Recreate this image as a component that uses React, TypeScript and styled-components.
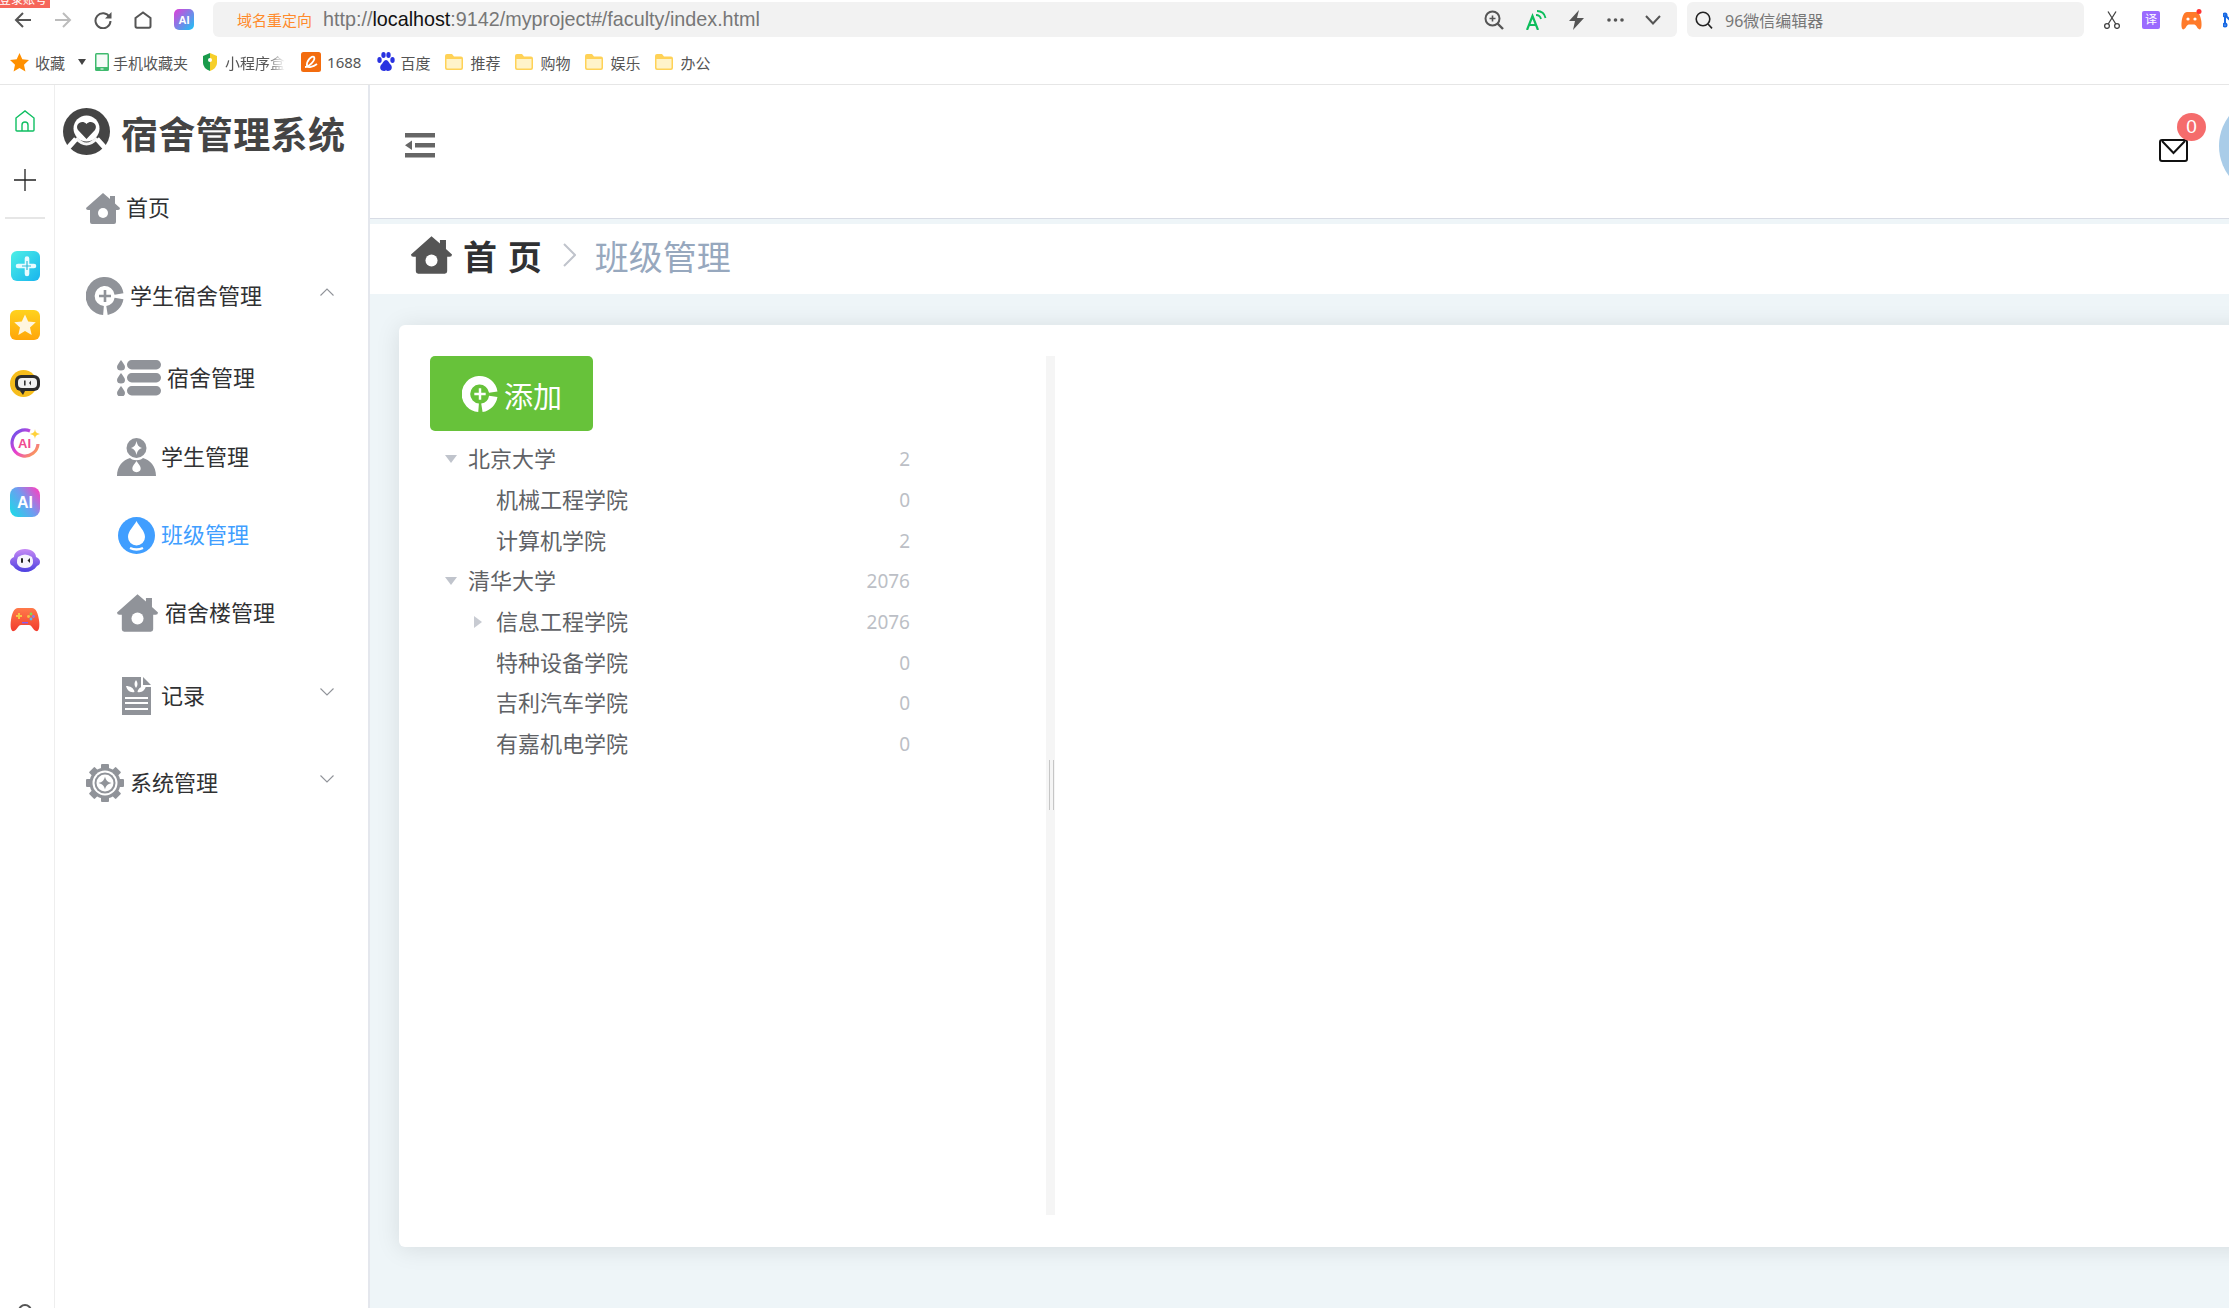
import React from "react";
import styled, { createGlobalStyle } from "styled-components";

const GlobalStyle = createGlobalStyle`
  html, body {
    margin: 0;
    padding: 0;
    background: #fff;
  }
  body {
    font-family: "Noto Sans", "Noto Sans CJK SC", sans-serif;
  }
  * {
    box-sizing: border-box;
  }
`;

type TreeNode = {
  label: string;
  count: number;
  depth: number;
  toggle?: "open" | "closed";
};

const treeData: TreeNode[] = [
  { label: "北京大学", count: 2, depth: 0, toggle: "open" },
  { label: "机械工程学院", count: 0, depth: 1 },
  { label: "计算机学院", count: 2, depth: 1 },
  { label: "清华大学", count: 2076, depth: 0, toggle: "open" },
  { label: "信息工程学院", count: 2076, depth: 1, toggle: "closed" },
  { label: "特种设备学院", count: 0, depth: 1 },
  { label: "吉利汽车学院", count: 0, depth: 1 },
  { label: "有嘉机电学院", count: 0, depth: 1 },
];

// ---- icons ----
const HomeIcon = ({ w, h }: { w: number; h: number }) => (
  <svg width={w} height={h} viewBox="0 0 34 31">
    <path
      fill="currentColor"
      d="M17 0 L24 6 V3 H29 V10.5 L34 15 Q34 17 32 17 H30 V29 Q30 31 28 31 H6 Q4 31 4 29 V17 H2 Q0 17 0 15 Z"
    />
    <circle cx="17" cy="20" r="5" fill="#fff" />
  </svg>
);

const RingPlusIcon = ({ size }: { size: number }) => (
  <svg width={size} height={size} viewBox="0 0 38 38" fill="none" stroke="currentColor">
    <path strokeWidth="9" d="M33 17 A14.5 14.5 0 1 0 17.5 33.5" />
    <path strokeWidth="9" d="M21 33.5 A14.5 14.5 0 0 0 33 21.5" />
    <path strokeWidth="2.6" d="M19 13 V25 M13 19 H25" />
  </svg>
);

const drop = (x: number, y: number, s: number) =>
  `M${x} ${y} C${x + 2 * s} ${y + 3 * s} ${x + 4 * s} ${y + 5 * s} ${x + 4 * s} ${y + 7 * s} A${4 * s} ${3.6 * s} 0 0 1 ${x - 4 * s} ${y + 7 * s} C${x - 4 * s} ${y + 5 * s} ${x - 2 * s} ${y + 3 * s} ${x} ${y} Z`;

const ListIcon = () => (
  <svg width="44" height="36" viewBox="0 0 44 36" fill="#909399">
    <path d={drop(4, 0, 1)} />
    <path d={drop(4, 13, 1)} />
    <path d={drop(4, 26, 1)} />
    <rect x="10" y="0" width="34" height="9.5" rx="4.7" />
    <rect x="10" y="13" width="34" height="9.5" rx="4.7" />
    <rect x="10" y="26" width="34" height="9.5" rx="4.7" />
  </svg>
);

const PersonIcon = () => (
  <svg width="39" height="38" viewBox="0 0 39 38" fill="#909399">
    <circle cx="19.5" cy="10" r="10" />
    <path fill="#fff" d="M19.5 3 C20.5 7.5 21.5 8.5 25 10 C21.5 11.5 20.5 12.5 19.5 17 C18.5 12.5 17.5 11.5 14 10 C17.5 8.5 18.5 7.5 19.5 3 Z" />
    <path d="M0 38 C0 28 6 22 13 20 C16 23 23 23 26 20 C33 22 39 28 39 38 Z" />
    <path fill="#fff" d={drop(19.5, 23, 1.05)} />
  </svg>
);

const DropCircleIcon = () => (
  <svg width="37" height="37" viewBox="0 0 37 37">
    <circle cx="18.5" cy="18.5" r="18.5" fill="#409eff" />
    <path fill="#fff" d="M18.5 4 C21 9 27 14 27 20 A8.5 8.5 0 0 1 10 20 C10 14 16 9 18.5 4 Z" />
    <path fill="none" stroke="#fff" strokeWidth="2.4" d="M12 31 Q18.5 34 25 31" />
  </svg>
);

const RecordIcon = () => (
  <svg width="29" height="38" viewBox="0 0 29 38" fill="#909399">
    <path d="M0 0 H19 V10 H29 V38 H0 Z" />
    <path d="M21 0 L29 8 H21 Z" />
    <path fill="#fff" d="M14 3 C16 6 16 8 14 11 C12 8 12 6 14 3 Z M4 9 C8 9 12 11 12.5 15 C8 16 5 13 4 9 Z M24 9 C20 9 16 11 15.5 15 C20 16 23 13 24 9 Z" />
    <rect x="3" y="20" width="23" height="2" fill="#fff" />
    <rect x="3" y="25" width="23" height="2" fill="#fff" />
    <rect x="3" y="31" width="23" height="2" fill="#fff" />
  </svg>
);

const GearIcon = () => (
  <svg width="38" height="38" viewBox="0 0 38 38">
    <g fill="#909399">
      {[0, 45, 90, 135, 180, 225, 270, 315].map((a) => (
        <rect key={a} x="15" y="0" width="8" height="8" rx="1" transform={`rotate(${a} 19 19)`} />
      ))}
      <circle cx="19" cy="19" r="15.5" />
    </g>
    <circle cx="19" cy="19" r="12.5" fill="#fff" />
    <circle cx="19" cy="19" r="10.5" fill="#909399" />
    <circle cx="19" cy="19" r="8.5" fill="#fff" />
    <path fill="#909399" d="M19 12.5 C20 16.5 21.5 18 25.5 19 C21.5 20 20 21.5 19 25.5 C18 21.5 16.5 20 12.5 19 C16.5 18 18 16.5 19 12.5 Z" />
  </svg>
);

const Chevron = ({ up }: { up?: boolean }) => (
  <svg width="14" height="8" viewBox="0 0 14 8" fill="none" stroke="#909399" strokeWidth="1.1">
    <path d={up ? "M0.5 7.5 L7 1 L13.5 7.5" : "M0.5 0.5 L7 7 L13.5 0.5"} />
  </svg>
);

const LogoIcon = () => (
  <svg width="47" height="47" viewBox="0 0 47 47">
    <circle cx="23.5" cy="23.5" r="23.5" fill="#444" />
    <circle cx="23.5" cy="20.5" r="13" fill="#fff" />
    <path fill="#444" d="M23.5 31 L15 22 C11.5 17 18.5 11 23.5 16 C28.5 11 35.5 17 32 22 Z" />
    <path stroke="#fff" strokeWidth="5" d="M13 31 L4 41 M34 31 L43 41" />
    <path fill="none" stroke="#fff" strokeWidth="3" d="M13 30 Q23.5 42 34 30" opacity="0.95" />
  </svg>
);

const BackIcon = ({ dim }: { dim?: boolean }) => (
  <svg width="18" height="18" viewBox="0 0 18 18" fill="none" stroke={dim ? "#bcbcbc" : "#555"} strokeWidth="2" style={dim ? { transform: "scaleX(-1)" } : undefined}>
    <path d="M17 9 H2 M9 2 L2 9 L9 16" />
  </svg>
);

const ReloadIcon = () => (
  <svg width="18" height="18" viewBox="0 0 18 18" fill="none" stroke="#555" strokeWidth="2">
    <path d="M15.5 6 A7.5 7.5 0 1 0 16.5 10" />
    <path fill="#555" stroke="none" d="M17.5 1 V7.5 H11 Z" />
  </svg>
);

const BrowserHomeIcon = () => (
  <svg width="18" height="18" viewBox="0 0 18 18" fill="none" stroke="#555" strokeWidth="2">
    <path d="M1.5 7 L9 1.5 L16.5 7 V15 Q16.5 16.8 15 16.8 H3 Q1.5 16.8 1.5 15 Z" />
  </svg>
);

const ZoomInIcon = () => (
  <svg width="20" height="20" viewBox="0 0 20 20" fill="none" stroke="#555" strokeWidth="2">
    <circle cx="8.5" cy="8.5" r="7" />
    <path strokeWidth="1.6" d="M8.5 5.5 V11.5 M5.5 8.5 H11.5" />
    <path strokeWidth="2.4" d="M13.5 13.5 L19 19" />
  </svg>
);

const ReadAloudIcon = () => (
  <svg width="21" height="20" viewBox="0 0 21 20" fill="none" stroke="#0cbd5b" strokeWidth="2.2">
    <path d="M1 20 L6.5 6 L12 20 M3 15 H10" />
    <path strokeWidth="1.8" d="M10 5 Q14 5 15 9 M11 1 Q18 1 19.5 8" />
  </svg>
);

const BoltIcon = () => (
  <svg width="17" height="20" viewBox="0 0 17 20" fill="#555">
    <path d="M11 0 L1 11 H7 L5 20 L16 8 H9 Z" />
  </svg>
);

const DotsIcon = () => (
  <svg width="17" height="4" viewBox="0 0 17 4" fill="#555">
    <circle cx="2" cy="2" r="1.8" />
    <circle cx="8.5" cy="2" r="1.8" />
    <circle cx="15" cy="2" r="1.8" />
  </svg>
);

const SearchIcon = () => (
  <svg width="18" height="18" viewBox="0 0 18 18" fill="none" stroke="#222" strokeWidth="1.6">
    <circle cx="8" cy="8" r="6.8" />
    <path d="M13 13 L17 17.4" />
  </svg>
);

const ScissorsIcon = () => (
  <svg width="18" height="18" viewBox="0 0 18 18" fill="none" stroke="#444" strokeWidth="1.3">
    <circle cx="4" cy="15" r="2.4" />
    <circle cx="14" cy="15" r="2.4" />
    <path d="M5.2 13 L13 0.5 M12.8 13 L5 0.5" />
  </svg>
);

const ExtensionGame = () => (
  <svg width="21" height="21" viewBox="0 0 21 21">
    <path fill="#ff7a2a" d="M6 3 H15 C18 3 19.5 7 20.3 12 C21 17 20.3 21 18.2 20.3 C16 19.5 15.3 15.5 13.2 15.5 H7.8 C5.7 15.5 5 19.5 2.8 20.3 C0.7 21 0 17 0.7 12 C1.5 7 3 3 6 3 Z" />
    <circle cx="7" cy="10" r="1.6" fill="#fff" />
    <circle cx="14" cy="10" r="1.6" fill="#fff" />
    <circle cx="18" cy="2.5" r="2.5" fill="#f33" />
  </svg>
);

const RailGame = () => (
  <svg width="30" height="25" viewBox="0 0 30 25">
    <defs>
      <linearGradient id="railPad" x1="0" y1="0" x2="0" y2="1">
        <stop offset="0" stopColor="#ff7a4a" />
        <stop offset="1" stopColor="#f23c2e" />
      </linearGradient>
    </defs>
    <path fill="url(#railPad)" d="M8 1 H22 C26 1 28 6 29 13 C30 20 29 25 26 24 C23 23 22 18 19 18 H11 C8 18 7 23 4 24 C1 25 0 20 1 13 C2 6 4 1 8 1 Z" />
    <path fill="#f6c544" d="M8 6 H10 V8 H12 V10 H10 V12 H8 V10 H6 V8 H8 Z" />
    <circle cx="21" cy="7" r="1.4" fill="#7ed957" />
    <circle cx="18.5" cy="9.5" r="1.4" fill="#f6c544" />
    <circle cx="23.5" cy="9.5" r="1.4" fill="#8a7cf0" />
    <circle cx="21" cy="12" r="1.4" fill="#5ab8f0" />
    <rect x="12" y="15" width="6" height="1.4" fill="#8a5cf0" />
  </svg>
);

const Folder = () => (
  <svg width="18" height="16" viewBox="0 0 18 16">
    <path fill="#ffd257" d="M0 2 Q0 0 2 0 H7 L9 2.5 H16 Q18 2.5 18 4.5 V14 Q18 16 16 16 H2 Q0 16 0 14 Z" />
    <path fill="#fff3c9" d="M1.5 5 H16.5 V13.5 Q16.5 14.5 15.5 14.5 H2.5 Q1.5 14.5 1.5 13.5 Z" />
  </svg>
);

const AiBadge = () => (
  <svg width="20" height="21" viewBox="0 0 20 21">
    <defs>
      <linearGradient id="aiTop" x1="0" y1="0" x2="1" y2="1">
        <stop offset="0" stopColor="#e13dd8" />
        <stop offset="1" stopColor="#18c5f5" />
      </linearGradient>
    </defs>
    <rect width="20" height="21" rx="5" fill="url(#aiTop)" />
    <text x="10" y="15" textAnchor="middle" fontSize="11" fontWeight="700" fill="#fff" fontFamily="Liberation Sans, sans-serif">
      AI
    </text>
  </svg>
);

// ---- browser rail icons ----
const RailHome = () => (
  <svg width="20" height="22" viewBox="0 0 20 22" fill="none" stroke="#0fbf62" strokeWidth="1.4">
    <path d="M1 8 L10 1 L19 8 V20 Q19 21 18 21 H2 Q1 21 1 20 Z" />
    <path d="M7 21 V15 A3 3 0 0 1 13 15 V21" />
  </svg>
);

const RailPlus = () => (
  <svg width="22" height="22" viewBox="0 0 22 22" fill="none" stroke="#222" strokeWidth="1.3">
    <path d="M11 0 V22 M0 11 H22" />
  </svg>
);

const RailCross = () => (
  <svg width="29" height="30" viewBox="0 0 29 30">
    <defs>
      <linearGradient id="railTeal" x1="0" y1="0" x2="1" y2="1">
        <stop offset="0" stopColor="#4ef0e6" />
        <stop offset="1" stopColor="#18b4ee" />
      </linearGradient>
    </defs>
    <rect width="29" height="30" rx="6" fill="url(#railTeal)" />
    <path fill="none" stroke="#e9fbff" strokeWidth="4.6" strokeLinecap="round" d="M16 7.5 V23 M7 15 H23" />
    <path fill="none" stroke="#35bcd9" strokeWidth="1.2" d="M16 10 V19 M11 15 H20" />
  </svg>
);

const RailStar = () => (
  <svg width="30" height="30" viewBox="0 0 30 30">
    <defs>
      <linearGradient id="railGold" x1="0" y1="0" x2="0" y2="1">
        <stop offset="0" stopColor="#ffd21e" />
        <stop offset="1" stopColor="#ffa50a" />
      </linearGradient>
    </defs>
    <rect width="30" height="30" rx="6" fill="url(#railGold)" />
    <path fill="#fff6df" d="M15 4.5 L18.2 11.5 L25.8 12.3 L20 17.4 L21.7 25 L15 21 L8.3 25 L10 17.4 L4.2 12.3 L11.8 11.5 Z" />
  </svg>
);

const RailBot = () => (
  <svg width="30" height="27" viewBox="0 0 30 27">
    <circle cx="13.5" cy="13.5" r="13.5" fill="#f6bd1c" />
    <rect x="5" y="5" width="25" height="16" rx="6" fill="#2c2c2c" />
    <path d="M10 21 L13 25 L15 21 Z" fill="#2c2c2c" />
    <rect x="8" y="8" width="19" height="10" rx="4" fill="#f2f2f2" />
    <rect x="14" y="10.5" width="1.6" height="5" fill="#333" />
    <path d="M21 10.5 L19 13 L21 15.5 Z" fill="#333" />
  </svg>
);

const RailAiRing = () => (
  <svg width="30" height="30" viewBox="0 0 30 30">
    <defs>
      <linearGradient id="railRing" x1="0" y1="0" x2="1" y2="1">
        <stop offset="0" stopColor="#5a55f0" />
        <stop offset="0.5" stopColor="#e83fd0" />
        <stop offset="1" stopColor="#ffb13c" />
      </linearGradient>
    </defs>
    <path fill="none" stroke="url(#railRing)" strokeWidth="3.2" d="M20 3 A13 13 0 1 0 28 16" />
    <text x="14.5" y="20" textAnchor="middle" fontSize="13" fontWeight="700" fill="#f0498f" fontFamily="Liberation Sans, sans-serif">
      AI
    </text>
    <path fill="#ffd23c" d="M25 1 C25.5 4 26 5 30 6 C26 7 25.5 8 25 11 C24.5 8 24 7 20 6 C24 5 24.5 4 25 1 Z" />
  </svg>
);

const RailAiSquare = () => (
  <svg width="30" height="30" viewBox="0 0 30 30">
    <defs>
      <linearGradient id="railAi" x1="0" y1="0.8" x2="1" y2="0.1">
        <stop offset="0" stopColor="#22d6e8" />
        <stop offset="0.5" stopColor="#6f9cf0" />
        <stop offset="1" stopColor="#ff3fc0" />
      </linearGradient>
    </defs>
    <rect width="30" height="30" rx="8" fill="url(#railAi)" />
    <text x="15" y="21" textAnchor="middle" fontSize="16" fontWeight="700" fill="#fff" fontFamily="Liberation Sans, sans-serif">
      AI
    </text>
  </svg>
);

const RailGhost = () => (
  <svg width="30" height="23" viewBox="0 0 30 23">
    <defs>
      <linearGradient id="railGhost" x1="0" y1="0" x2="0" y2="1">
        <stop offset="0" stopColor="#c78af5" />
        <stop offset="1" stopColor="#4b3fe0" />
      </linearGradient>
    </defs>
    <path fill="url(#railGhost)" d="M15 0 C22 0 26 4 26 8 C29 9 30 11 30 13 C30 15 29 16 27 17 C24 21 20 23 15 23 C10 23 6 21 3 17 C1 16 0 15 0 13 C0 11 1 9 4 8 C4 4 8 0 15 0 Z" />
    <path fill="#f5f2fb" d="M8 8 Q15 3 22 8 Q25 15 20 18 Q15 20 10 18 Q5 15 8 8 Z" />
    <rect x="11" y="9" width="2" height="5" rx="1" fill="#222" />
    <path d="M20 9 L17.5 11.5 L20 14 Z" fill="#222" />
  </svg>
);

const MailIcon = () => (
  <svg width="29" height="23" viewBox="0 0 29 23" fill="none" stroke="#111" strokeWidth="2">
    <rect x="1" y="1" width="27" height="21" rx="2" />
    <path d="M3 2 L14.5 14 L26 2" />
  </svg>
);

const CollapseIcon = () => (
  <svg width="30" height="25" viewBox="0 0 30 25" fill="#666" style={{ flexShrink: 0 }}>
    <rect x="0" y="0" width="30" height="4.5" />
    <rect x="10" y="10" width="20" height="4.5" />
    <rect x="0" y="20" width="30" height="4.5" />
    <path d="M0 12.3 L7 7.5 V17 Z" />
  </svg>
);

const ArrowRight = () => (
  <svg width="13" height="24" viewBox="0 0 13 24" fill="none" stroke="#c0c4cc" strokeWidth="2">
    <path d="M1 1 L12 12 L1 23" />
  </svg>
);

const Page = styled.div`
  position: relative;
  width: 2229px;
  height: 1308px;
  overflow: hidden;
  display: flex;
  flex-direction: column;
  background: #fff;
`;

// ---- browser chrome ----
const LoginTag = styled.div`
  position: absolute;
  top: 0;
  left: 0;
  width: 50px;
  height: 8px;
  overflow: hidden;
  background: #f6665a;
  color: #fff;
  font-size: 12px;
  line-height: 12px;
  white-space: nowrap;
  & > span {
    display: block;
    margin: -6px 0 0 -1px;
  }
`;

const Toolbar = styled.div`
  height: 42px;
  padding: 2px 0 5px 14px;
  display: flex;
  align-items: center;
  flex-shrink: 0;
`;

const NavButtons = styled.div`
  display: flex;
  align-items: center;
  gap: 22px;
`;

const AddressBar = styled.div`
  width: 1464px;
  height: 35px;
  margin-left: 19px;
  padding: 0 16px 0 24px;
  background: #f2f2f2;
  border-radius: 6px;
  display: flex;
  align-items: center;
  flex-shrink: 0;
`;

const RedirectTag = styled.span`
  font-size: 15px;
  color: #ff8a2b;
  width: 86px;
  flex-shrink: 0;
`;

const UrlText = styled.span`
  font-family: "Liberation Sans", sans-serif;
  font-size: 19.75px;
  color: #777;
  & > b {
    font-weight: 400;
    color: #111;
  }
`;

const AddressTools = styled.div`
  margin-left: auto;
  display: flex;
  align-items: center;
  gap: 21.5px;
`;

const SearchBox = styled.div`
  width: 397px;
  height: 35px;
  margin-left: 10px;
  padding-left: 8px;
  background: #f2f2f2;
  border-radius: 6px;
  display: flex;
  align-items: center;
  gap: 12px;
  flex-shrink: 0;
  font-size: 16px;
  color: #777;
`;

const Extensions = styled.div`
  margin-left: 19px;
  display: flex;
  align-items: center;
  gap: 21px;
  flex-shrink: 0;
`;

const TranslateBadge = styled.span`
  width: 18px;
  height: 18px;
  border-radius: 2px;
  background: #9b6bff;
  color: #fff;
  font-size: 12px;
  line-height: 18px;
  text-align: center;
`;

const BookmarkBar = styled.div`
  height: 43px;
  padding: 0 0 2px 10px;
  border-bottom: 1px solid #e6e6e6;
  display: flex;
  align-items: center;
  gap: 15px;
  font-size: 15px;
  color: #555;
  flex-shrink: 0;
`;

const Bookmark = styled.div<{ $gap?: number; $after?: number }>`
  display: flex;
  align-items: center;
  gap: ${(p) => p.$gap ?? 6}px;
  margin-right: ${(p) => p.$after ?? 0}px;
  white-space: nowrap;
`;

const FadeLabel = styled.span`
  -webkit-mask-image: linear-gradient(to right, #000 70%, transparent 100%);
  mask-image: linear-gradient(to right, #000 70%, transparent 100%);
`;

const Caret = styled.span`
  width: 0;
  height: 0;
  margin: 0 -6px 0 -2px;
  border-left: 4px solid transparent;
  border-right: 4px solid transparent;
  border-top: 6px solid #444;
`;

// ---- page body ----
const Body = styled.div`
  flex: 1;
  min-height: 0;
  display: flex;
`;

const Rail = styled.div`
  width: 55px;
  padding: 6px 4px 0 0;
  border-right: 1px solid #eeeeee;
  display: flex;
  flex-direction: column;
  align-items: center;
  overflow: hidden;
  flex-shrink: 0;
`;

const RailSlot = styled.div`
  height: 59px;
  display: flex;
  align-items: center;
  justify-content: center;
  flex-shrink: 0;
`;

const RailDivider = styled.div`
  width: 40px;
  height: 2px;
  margin: 8px 0 17px;
  background: #e6e6e6;
  flex-shrink: 0;
`;

const RailFoot = styled.div`
  margin-top: auto;
  margin-bottom: -10px;
  width: 14px;
  height: 14px;
  border: 2px solid #555;
  border-radius: 50%;
  flex-shrink: 0;
`;

const Sidebar = styled.aside`
  width: 315px;
  border-right: 2px solid #e4e7ed;
  flex-shrink: 0;
  color: #303133;
`;

const Brand = styled.div`
  height: 93px;
  padding: 23px 0 0 8px;
  display: flex;
  align-items: flex-start;
  gap: 11px;
`;

const BrandTitle = styled.h1`
  margin: 3px 0 0;
  font-size: 37px;
  line-height: 47px;
  letter-spacing: 0.4px;
  font-weight: 700;
  color: #444;
  white-space: nowrap;
`;

const MenuRow = styled.div<{ $indent: number; $top: number; $gap: number; $active?: boolean }>`
  height: 60px;
  margin-top: ${(p) => p.$top}px;
  padding: 0 34px 0 ${(p) => p.$indent}px;
  display: flex;
  align-items: center;
  gap: ${(p) => p.$gap}px;
  font-size: 22px;
  color: ${(p) => (p.$active ? "#409eff" : "#303133")};
  & > svg {
    flex-shrink: 0;
  }
`;

const MenuLabel = styled.span`
  padding-bottom: 4px;
`;

const GreyIcon = styled.span`
  display: flex;
  color: #909399;
`;

const MenuArrow = styled.span`
  margin-left: auto;
  margin-bottom: 8px;
  display: flex;
`;

const Main = styled.main`
  flex: 1;
  min-width: 0;
  overflow: hidden;
  background: #eef5f8;
`;

const Header = styled.header`
  height: 134px;
  padding-left: 35px;
  background: #fff;
  border-bottom: 1px solid #d8dce5;
  display: flex;
  align-items: center;
  & > svg {
    margin-bottom: 12px;
  }
`;

const HeaderRight = styled.div`
  margin-left: auto;
  display: flex;
  align-items: center;
  gap: 31px;
  margin-right: -90px;
`;

const MailButton = styled.div`
  position: relative;
  display: flex;
  margin-top: -2px;
`;

const Badge = styled.span`
  position: absolute;
  top: -26px;
  left: 18px;
  width: 29px;
  height: 28px;
  border-radius: 50%;
  background: #f56c6c;
  color: #fff;
  font-family: "Liberation Sans", sans-serif;
  font-size: 19px;
  line-height: 28px;
  text-align: center;
`;

const Avatar = styled.div`
  width: 100px;
  height: 100px;
  margin-bottom: 12px;
  border-radius: 50%;
  background: #a9cce8;
  flex-shrink: 0;
`;

const Breadcrumb = styled.div`
  height: 70px;
  margin-top: 5px;
  padding: 0 0 8px 41px;
  background: #fff;
  display: flex;
  align-items: center;
`;

const CrumbHome = styled.span`
  display: flex;
  margin-right: 11px;
  color: #555;
`;

const CrumbRoot = styled.span`
  font-size: 34px;
  font-weight: 700;
  color: #303133;
  word-spacing: 2px;
  margin-right: 21px;
`;

const CrumbCurrent = styled.span`
  margin-left: 19px;
  font-size: 34px;
  color: #97a8be;
`;

const Card = styled.section`
  width: 2000px;
  height: 922px;
  margin: 31px 0 0 29px;
  padding: 31px 0 0 31px;
  background: #fff;
  border-radius: 6px;
  box-shadow: 0 2px 24px rgba(0, 0, 0, 0.1);
  display: flex;
  align-items: flex-start;
`;

const TreePane = styled.div`
  width: 616px;
  flex-shrink: 0;
`;

const AddButton = styled.button`
  width: 163px;
  height: 75px;
  padding: 0 0 0 32px;
  border: 0;
  border-radius: 5px;
  background: #67c23a;
  color: #fff;
  font-family: inherit;
  font-size: 29px;
  display: flex;
  align-items: center;
  gap: 6px;
  & > span {
    padding-top: 2px;
  }
`;

const Tree = styled.div`
  margin-top: 8px;
`;

const TreeRow = styled.div<{ $depth: number }>`
  height: 40.7px;
  padding: 0 136px 0 ${(p) => 14 + p.$depth * 28}px;
  display: flex;
  align-items: center;
  font-size: 22px;
  color: #606266;
`;

const TreeLabel = styled.span`
  padding-bottom: 4px;
`;

const ToggleSlot = styled.span`
  width: 24px;
  flex-shrink: 0;
  display: flex;
`;

const ToggleOpen = styled.i`
  width: 0;
  height: 0;
  margin-left: 1px;
  border-left: 6px solid transparent;
  border-right: 6px solid transparent;
  border-top: 8px solid #c0c4cc;
`;

const ToggleClosed = styled.i`
  width: 0;
  height: 0;
  margin-left: 2px;
  border-top: 6px solid transparent;
  border-bottom: 6px solid transparent;
  border-left: 8px solid #c8cbd2;
`;

const Count = styled.span`
  margin-left: auto;
  font-size: 19px;
  color: #bcbfc6;
`;

const Splitter = styled.div`
  position: relative;
  width: 9px;
  height: 859px;
  background: #f5f5f5;
  flex-shrink: 0;
`;

const SplitHandle = styled.div`
  position: absolute;
  top: 404px;
  left: 2.5px;
  width: 5px;
  height: 50px;
  border-left: 1.5px solid #c6c6c6;
  border-right: 1.5px solid #c6c6c6;
`;

const menu = [
  { label: "宿舍管理", icon: <ListIcon />, indent: 62, top: 22, gap: 6 },
  { label: "学生管理", icon: <PersonIcon />, indent: 62, top: 19, gap: 5 },
  { label: "班级管理", icon: <DropCircleIcon />, indent: 63, top: 18, gap: 6, active: true },
  { label: "宿舍楼管理", icon: <GreyIcon><HomeIcon w={41} h={38} /></GreyIcon>, indent: 62, top: 18, gap: 7 },
];

const bookmarkFolders = ["推荐", "购物", "娱乐", "办公"];

const App = () => {
  return (
    <Page>
      <GlobalStyle />
      <LoginTag>
        <span>登录账号</span>
      </LoginTag>
      <Toolbar>
        <NavButtons>
          <BackIcon />
          <BackIcon dim />
          <ReloadIcon />
          <BrowserHomeIcon />
          <AiBadge />
        </NavButtons>
        <AddressBar>
          <RedirectTag>域名重定向</RedirectTag>
          <UrlText>
            http://<b>localhost</b>:9142/myproject#/faculty/index.html
          </UrlText>
          <AddressTools>
            <ZoomInIcon />
            <ReadAloudIcon />
            <BoltIcon />
            <DotsIcon />
            <svg width="16" height="10" viewBox="0 0 16 10" fill="none" stroke="#555" strokeWidth="2">
              <path d="M1 1 L8 8.5 L15 1" />
            </svg>
          </AddressTools>
        </AddressBar>
        <SearchBox>
          <SearchIcon />
          96微信编辑器
        </SearchBox>
        <Extensions>
          <ScissorsIcon />
          <TranslateBadge>译</TranslateBadge>
          <ExtensionGame />
          <svg width="12" height="18" viewBox="0 0 12 18" fill="none" stroke="#1668e3" strokeWidth="2">
            <circle cx="2" cy="4" r="1.5" />
            <circle cx="2" cy="14" r="1.5" />
            <path d="M2 5 V13 M2 4 L10 12" />
          </svg>
        </Extensions>
      </Toolbar>
      <BookmarkBar>
        <Bookmark>
          <svg width="19" height="19" viewBox="0 0 19 19" fill="#ff9000">
            <path d="M9.5 0 L12.3 6.3 L19 7.1 L14 11.7 L15.4 18.6 L9.5 15.1 L3.6 18.6 L5 11.7 L0 7.1 L6.7 6.3 Z" />
          </svg>
          收藏
        </Bookmark>
        <Caret />
        <Bookmark $gap={4}>
          <svg width="14" height="18" viewBox="0 0 14 18">
            <rect width="14" height="18" rx="1.5" fill="#3fba6e" />
            <rect x="1.5" y="1.5" width="11" height="12.5" fill="#f6fbf8" />
            <rect x="5.5" y="15.5" width="3" height="1" fill="#fff" />
          </svg>
          手机收藏夹
        </Bookmark>
        <Bookmark $gap={8} $after={1}>
          <svg width="14" height="18" viewBox="0 0 14 18">
            <path fill="#1a9b4b" d="M7 0 L14 3 V10 Q14 15 7 18 Z" transform="matrix(-1 0 0 1 14 0)" />
            <path fill="#f6cf2a" d="M7 0 L14 3 V10 Q14 15 7 18 Z" />
            <circle cx="7" cy="7" r="2" fill="#fff" />
          </svg>
          <FadeLabel>小程序盒</FadeLabel>
        </Bookmark>
        <Bookmark $after={1}>
          <svg width="20" height="20" viewBox="0 0 20 20">
            <rect width="20" height="20" rx="2.5" fill="#f36c0e" />
            <path fill="none" stroke="#fff" strokeWidth="1.8" d="M4 15 C8 15 15 8 13 5 C11 3 5 9 6 14 C7 16 12 15 16 12" />
          </svg>
          1688
        </Bookmark>
        <Bookmark $gap={5}>
          <svg width="18" height="20" viewBox="0 0 18 20" fill="#2932e1">
            <ellipse cx="2.5" cy="8" rx="2.2" ry="3" />
            <ellipse cx="6.5" cy="3" rx="2.2" ry="3" />
            <ellipse cx="11.5" cy="3" rx="2.2" ry="3" />
            <ellipse cx="15.5" cy="8" rx="2.2" ry="3" />
            <path d="M9 8 C11 8 12 11 14 13 C16 16 14 19 11 19 C10 19 10 18.5 9 18.5 C8 18.5 8 19 7 19 C4 19 2 16 4 13 C6 11 7 8 9 8 Z" />
          </svg>
          百度
        </Bookmark>
        {bookmarkFolders.map((name) => (
          <Bookmark key={name} $gap={7}>
            <Folder />
            {name}
          </Bookmark>
        ))}
      </BookmarkBar>
      <Body>
        <Rail>
          <RailSlot><RailHome /></RailSlot>
          <RailSlot><RailPlus /></RailSlot>
          <RailDivider />
          <RailSlot><RailCross /></RailSlot>
          <RailSlot><RailStar /></RailSlot>
          <RailSlot><RailBot /></RailSlot>
          <RailSlot><RailAiRing /></RailSlot>
          <RailSlot><RailAiSquare /></RailSlot>
          <RailSlot><RailGhost /></RailSlot>
          <RailSlot><RailGame /></RailSlot>
          <RailFoot />
        </Rail>
        <Sidebar>
          <Brand>
            <LogoIcon />
            <BrandTitle>宿舍管理系统</BrandTitle>
          </Brand>
          <MenuRow $indent={31} $top={0} $gap={6}>
            <GreyIcon><HomeIcon w={34} h={31} /></GreyIcon>
            <MenuLabel>首页</MenuLabel>
          </MenuRow>
          <MenuRow $indent={31} $top={28} $gap={6}>
            <GreyIcon><RingPlusIcon size={38} /></GreyIcon>
            <MenuLabel>学生宿舍管理</MenuLabel>
            <MenuArrow><Chevron up /></MenuArrow>
          </MenuRow>
          {menu.map((m) => (
            <MenuRow key={m.label} $indent={m.indent} $top={m.top} $gap={m.gap} $active={m.active}>
              {m.icon}
              <MenuLabel>{m.label}</MenuLabel>
            </MenuRow>
          ))}
          <MenuRow $indent={67} $top={23} $gap={10}>
            <RecordIcon />
            <MenuLabel>记录</MenuLabel>
            <MenuArrow><Chevron /></MenuArrow>
          </MenuRow>
          <MenuRow $indent={31} $top={27} $gap={6}>
            <GearIcon />
            <MenuLabel>系统管理</MenuLabel>
            <MenuArrow><Chevron /></MenuArrow>
          </MenuRow>
        </Sidebar>
        <Main>
          <Header>
            <CollapseIcon />
            <HeaderRight>
              <MailButton>
                <MailIcon />
                <Badge>0</Badge>
              </MailButton>
              <Avatar />
            </HeaderRight>
          </Header>
          <Breadcrumb>
            <CrumbHome><HomeIcon w={41} h={38} /></CrumbHome>
            <CrumbRoot>首 页</CrumbRoot>
            <ArrowRight />
            <CrumbCurrent>班级管理</CrumbCurrent>
          </Breadcrumb>
          <Card>
            <TreePane>
              <AddButton>
                <RingPlusIcon size={36} />
                <span>添加</span>
              </AddButton>
              <Tree>
                {treeData.map((node) => (
                  <TreeRow key={node.label} $depth={node.depth}>
                    <ToggleSlot>
                      {node.toggle === "open" && <ToggleOpen />}
                      {node.toggle === "closed" && <ToggleClosed />}
                    </ToggleSlot>
                    <TreeLabel>{node.label}</TreeLabel>
                    <Count>{node.count}</Count>
                  </TreeRow>
                ))}
              </Tree>
            </TreePane>
            <Splitter>
              <SplitHandle />
            </Splitter>
          </Card>
        </Main>
      </Body>
    </Page>
  );
};

export default App;
